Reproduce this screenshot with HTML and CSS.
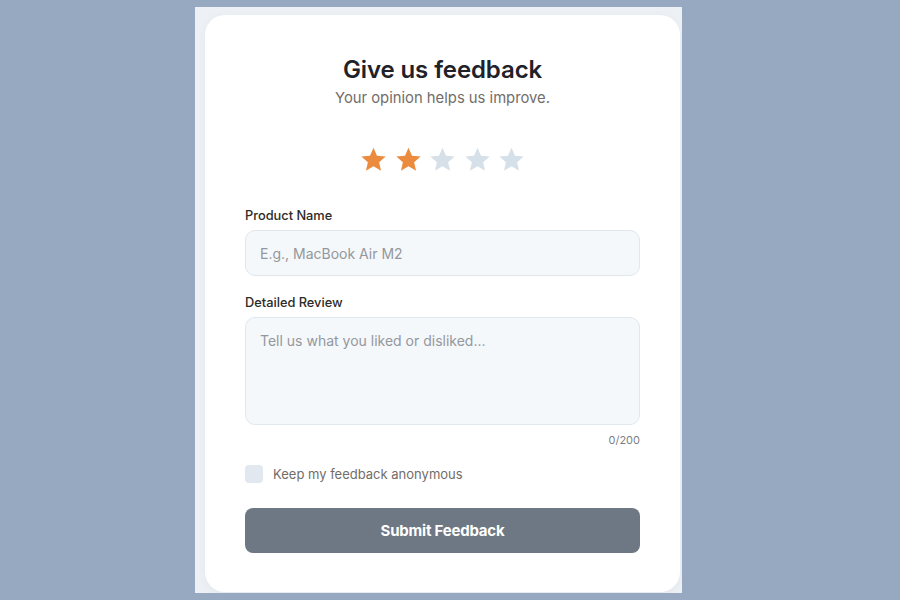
FILE: index.html
```html
<!DOCTYPE html>
<html lang="en">
<head>
<meta charset="utf-8">
<title>Feedback</title>
<link rel="stylesheet" href="styles.css">
</head>
<body>
<div class="panel">
  <form class="card">
    <h1 class="title">Give us feedback</h1>
    <p class="subtitle">Your opinion helps us improve.</p>
    <div class="stars">
      <svg class="star on" viewBox="0 0 24 24"><path d="M12 1.5l3.1 7.1 7.7.7-5.8 5.1 1.7 7.6L12 18l-6.7 4 1.7-7.6-5.8-5.1 7.7-.7z"/></svg>
      <svg class="star on" viewBox="0 0 24 24"><path d="M12 1.5l3.1 7.1 7.7.7-5.8 5.1 1.7 7.6L12 18l-6.7 4 1.7-7.6-5.8-5.1 7.7-.7z"/></svg>
      <svg class="star" viewBox="0 0 24 24"><path d="M12 1.5l3.1 7.1 7.7.7-5.8 5.1 1.7 7.6L12 18l-6.7 4 1.7-7.6-5.8-5.1 7.7-.7z"/></svg>
      <svg class="star" viewBox="0 0 24 24"><path d="M12 1.5l3.1 7.1 7.7.7-5.8 5.1 1.7 7.6L12 18l-6.7 4 1.7-7.6-5.8-5.1 7.7-.7z"/></svg>
      <svg class="star" viewBox="0 0 24 24"><path d="M12 1.5l3.1 7.1 7.7.7-5.8 5.1 1.7 7.6L12 18l-6.7 4 1.7-7.6-5.8-5.1 7.7-.7z"/></svg>
    </div>
    <label class="label" for="pn">Product Name</label>
    <input class="field" id="pn" type="text" placeholder="E.g., MacBook Air M2">
    <label class="label label-2" for="rv">Detailed Review</label>
    <textarea class="field area" id="rv" placeholder="Tell us what you liked or disliked..."></textarea>
    <div class="counter">0/200</div>
    <label class="check">
      <span class="box"></span>
      <span class="check-text">Keep my feedback anonymous</span>
    </label>
    <button class="submit" type="button">Submit Feedback</button>
  </form>
</div>
</body>
</html>
```

FILE: styles.css
```css
* { box-sizing: border-box; }
html, body { margin: 0; padding: 0; }
body {
  background: #97a9c0;
  font-family: Inter, "Noto Sans", "Liberation Sans", sans-serif;
  padding: 7px 0 0 195px;
}
.panel {
  width: 487px;
  height: 586px;
  background: #edf1f5;
  padding: 8px 2px 0 10px;
  overflow: hidden;
}
.card {
  width: 475px;
  height: 577px;
  background: #ffffff;
  border-radius: 20px;
  box-shadow: 0 2px 8px rgba(60, 80, 110, 0.06);
  padding: 40px 40px 0 40px;
  display: flex;
  flex-direction: column;
}
.title {
  margin: 0;
  text-align: center;
  font-size: 24px;
  line-height: 30px;
  font-weight: 600;
  color: #1f2329;
  letter-spacing: -0.1px;
}
.subtitle {
  margin: 3px 0 0;
  text-align: center;
  font-size: 14.8px;
  line-height: 20px;
  color: #726d69;
}
.stars {
  display: flex;
  justify-content: center;
  gap: 7.5px;
  margin-top: 37px;
  height: 28px;
  align-items: center;
}
.star {
  width: 27px;
  height: 27px;
  fill: #d6e0e8;
}
.star.on { fill: #eb8b3d; }
.label {
  margin-top: 34px;
  font-size: 12.8px;
  line-height: 18px;
  font-weight: 500;
  color: #2d2a27;
}
.label-2 { margin-top: 18px; }
.field {
  margin-top: 5px;
  width: 100%;
  height: 46px;
  border: 1px solid #dfe7ef;
  border-radius: 10px;
  background: #f5f8fb;
  font-family: inherit;
  font-size: 14px;
  color: #333;
  padding: 0 14px;
  outline: none;
}
.field::placeholder { color: #94979c; }
.area {
  height: 108px;
  padding: 13px 14px;
  resize: none;
  line-height: 20px;
}
.counter {
  margin-top: 8px;
  text-align: right;
  font-size: 11px;
  line-height: 14px;
  color: #7b7f85;
}
.check {
  margin-top: 18px;
  display: flex;
  align-items: center;
  gap: 10px;
  height: 18px;
}
.box {
  width: 18px;
  height: 18px;
  border-radius: 4px;
  background: #e2e8f0;
}
.check-text {
  font-size: 13px;
  color: #726d69;
}
.submit {
  margin-top: 25px;
  width: 100%;
  height: 45px;
  border: none;
  border-radius: 8px;
  background: #6d7884;
  color: #ffffff;
  font-family: inherit;
  font-size: 15px;
  font-weight: 700;
  letter-spacing: -0.2px;
}
```
